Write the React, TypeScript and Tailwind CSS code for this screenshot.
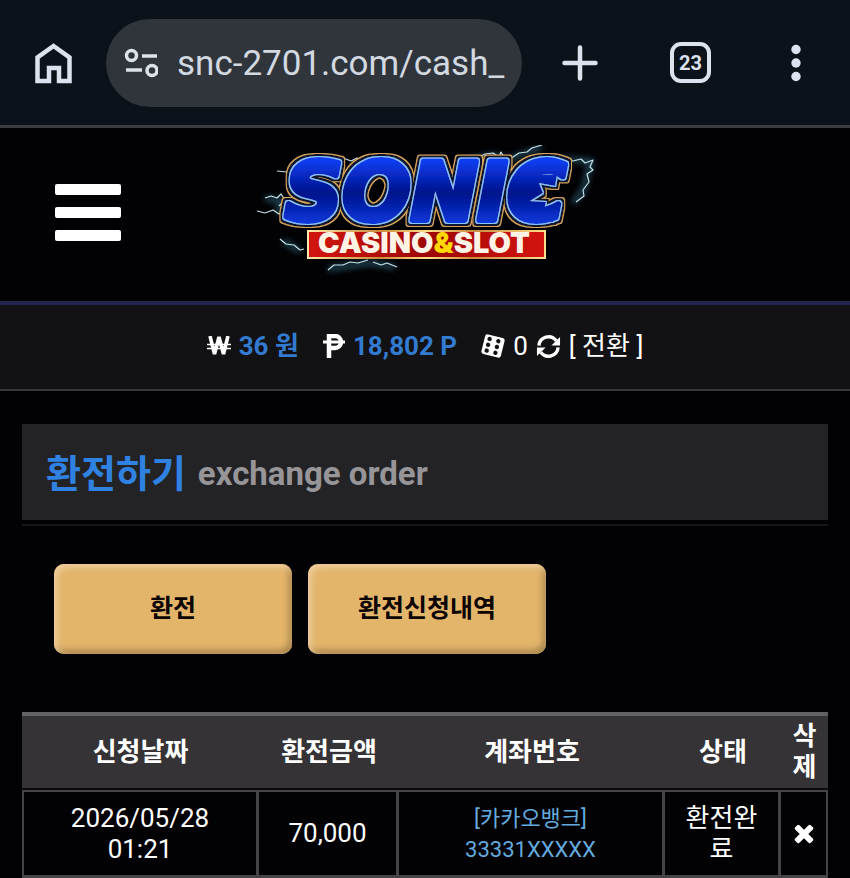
interface Order {
  date: string;
  time: string;
  amount: string;
  bank: string;
  account: string;
  status: string;
}

const ORDERS: Order[] = [
  {
    date: '2026/05/28',
    time: '01:21',
    amount: '70,000',
    bank: '[카카오뱅크]',
    account: '33331XXXXX',
    status: '환전완료',
  },
];

const TABS = ['환전', '환전신청내역'];

function SiteInfoIcon() {
  return (
    <svg width="34" height="30" viewBox="0 0 34 30" fill="none" stroke="#dde3ea" strokeWidth="3.500" className="shrink-0">
      <circle cx="7.500" cy="7.500" r="5" />
      <path d="M18 8h15M2 22h16" />
      <circle cx="28" cy="22.500" r="5" />
    </svg>
  );
}

function BrowserBar() {
  return (
    <header className="flex h-[128px] items-center border-b-3 border-[#3b3d42] bg-[#0c1219] pr-[45px] pl-[34px] text-[#dde3ee]">
      <button aria-label="Home" className="shrink-0">
        <svg width="38" height="42" viewBox="0 0 38 42" fill="none" stroke="currentColor" strokeWidth="4.500">
          <path d="M3.500 39V15.500L19.500 4l16 11.500V39H25V26H15v13z" />
        </svg>
      </button>
      <div className="ml-[34px] flex h-[88px] flex-1 items-center rounded-full bg-[#2f353b] pr-4 pl-[18px]">
        <SiteInfoIcon />
        <input
          aria-label="Address"
          readOnly
          defaultValue="snc-2701.com/cash_"
          className="ml-[19px] w-full min-w-0 bg-transparent pt-1 text-[35px] text-[#d3d9e1] outline-none"
        />
      </div>
      <button aria-label="New tab" className="ml-10 shrink-0">
        <svg width="36" height="36" viewBox="0 0 36 36" stroke="currentColor" strokeWidth="4.500" strokeLinecap="round">
          <path d="M18 2.500v31M2.500 18h31" />
        </svg>
      </button>
      <button
        aria-label="23 open tabs"
        className="ml-[72px] size-[41px] shrink-0 rounded-[11px] border-4 border-current text-[20px] font-bold"
      >
        23
      </button>
      <button aria-label="More" className="ml-[76px] shrink-0">
        <svg width="18" height="38" viewBox="0 0 18 38" fill="currentColor">
          <circle cx="9" cy="5.500" r="4.700" />
          <circle cx="9" cy="19" r="4.700" />
          <circle cx="9" cy="32.500" r="4.700" />
        </svg>
      </button>
    </header>
  );
}

function Logo() {
  return (
    <svg width="360" height="140" viewBox="0 0 360 140" role="img" aria-label="Sonic Casino & Slot">
      <defs>
        <linearGradient id="blue" gradientUnits="userSpaceOnUse" x1="0" y1="16" x2="0" y2="80">
          <stop offset="0" stopColor="#0b3df0" />
          <stop offset="0.5" stopColor="#02128a" />
          <stop offset="1" stopColor="#0a3ae0" />
        </linearGradient>
        <linearGradient id="gold" x1="0" y1="0" x2="1" y2="0">
          <stop offset="0" stopColor="#ffe9a8" />
          <stop offset="0.3" stopColor="#c98a3c" />
          <stop offset="0.5" stopColor="#ffdf8a" />
          <stop offset="0.7" stopColor="#c98a3c" />
          <stop offset="1" stopColor="#ffe08c" />
        </linearGradient>
        <linearGradient id="red" x1="0" y1="0" x2="1" y2="0">
          <stop offset="0" stopColor="#d3150f" />
          <stop offset="0.5" stopColor="#9d0604" />
          <stop offset="1" stopColor="#d3150f" />
        </linearGradient>
        <filter id="glow" x="-20%" y="-20%" width="140%" height="140%">
          <feGaussianBlur stdDeviation="3" />
        </filter>
        {/* light edge, navy rim, then a thin gold rim around the letters */}
        <filter id="rim" x="-10%" y="-20%" width="120%" height="140%">
          <feMorphology in="SourceAlpha" operator="dilate" radius="1" result="edge" />
          <feMorphology in="SourceAlpha" operator="dilate" radius="3" result="inner" />
          <feMorphology in="SourceAlpha" operator="dilate" radius="4" result="outer" />
          <feFlood floodColor="#8fc4ff" />
          <feComposite in2="edge" operator="in" result="light" />
          <feFlood floodColor="#07182f" />
          <feComposite in2="inner" operator="in" result="navy" />
          <feFlood floodColor="#d9a55c" />
          <feComposite in2="outer" operator="in" result="goldRim" />
          <feMerge>
            <feMergeNode in="goldRim" />
            <feMergeNode in="navy" />
            <feMergeNode in="light" />
            <feMergeNode in="SourceGraphic" />
          </feMerge>
        </filter>
      </defs>
      <g fill="none" stroke="#4b9fbd" strokeWidth="4" opacity="0.6" filter="url(#glow)">
        <path d="M20 53l18 4-6 12M215 18l33-8 14 5 35-13M312 14l34 2-8 30-10 12M38 96l17 10M83 124l42-6 25 4" />
      </g>
      <g fill="none" stroke="#c3e3ea" strokeWidth="1.200" strokeLinejoin="round">
        <path d="M12 66l8 2 8-3 6 4 5-3M20 53l6-2 6 2 4-4 4 6-6 6M32 26l10 1 8-3M92 16l6-3 8 3 6-3 6 2 8-2" />
        <path d="M215 18l9-4 8-1 8-4 8-1 6 4 2-5 4 7 8-2 6-4 8-1 5-4 10-3" />
        <path d="M310 16l10-3 8 3 8-2 4 4 8-3-3 7 3 3-6 4 2 8-6 8 1 6-8 6" />
        <path d="M35 94l6 5 8 1 6 5 4-1M83 125l6-5 9 0 7-3 8 1 10-3M128 117l8 3 6-2 10 4" />
      </g>
      <g fill="url(#blue)" filter="url(#rim)">
        <text
          x="40"
          y="75"
          fontFamily="'DejaVu Sans', sans-serif"
          fontSize="80"
          fontWeight="700"
          fontStyle="italic"
          stroke="url(#blue)"
          strokeWidth="6"
          strokeLinejoin="round"
        >
          SONIC
        </text>
        {/* torn inner edge of the last letter */}
        <path d="M276 28l36 2-2 11-16-3 4 10-13 8 16 1-2 8 13-6-4 18-32-4z" />
      </g>
      <rect x="63" y="86" width="237" height="27" fill="url(#red)" stroke="url(#gold)" strokeWidth="2" />
      <text x="179" y="108" textAnchor="middle" fontFamily="Inter, sans-serif" fontSize="29" fontWeight="900" fill="#fff3e6">
        CASINO<tspan fill="#ffd800">&amp;</tspan>SLOT
      </text>
    </svg>
  );
}

function WonIcon() {
  return (
    <svg width="24" height="20" viewBox="0 0 24 20" fill="none" stroke="#fff">
      <path d="M3 0l4.500 18L12 1l4.500 17L21 0" strokeWidth="3.600" strokeLinejoin="bevel" />
      <path d="M0 8.500h24M0 12.500h24" strokeWidth="1.500" />
    </svg>
  );
}

function PesoIcon() {
  return (
    <svg width="22" height="24" viewBox="0 0 22 24" fill="none" stroke="#fff">
      <path d="M6 24V2h6a5 5 0 0 1 0 12H6" strokeWidth="4.500" />
      <path d="M0 8h22" strokeWidth="3" />
    </svg>
  );
}

function DiceIcon() {
  return (
    <svg width="24" height="26" viewBox="0 0 24 26">
      <g transform="rotate(14 12 13)">
        <rect x="2" y="3" width="20" height="20" rx="2.500" fill="#fff" />
        <g fill="#121113">
          <circle cx="7" cy="7" r="2.200" />
          <circle cx="16" cy="7" r="2.200" />
          <circle cx="7" cy="13" r="2.200" />
          <circle cx="16" cy="13" r="2.200" />
          <circle cx="7" cy="19" r="2.200" />
          <circle cx="16" cy="19" r="2.200" />
        </g>
      </g>
    </svg>
  );
}

function ConvertIcon() {
  return (
    <svg width="25" height="25" viewBox="0 0 26 26" fill="none" stroke="#fff" strokeWidth="3.500">
      <path d="M3 12a10 10 0 0 1 18-5M23 14a10 10 0 0 1-18 5" />
      <path d="M25 3v9h-9zM1 23v-9h9z" fill="#fff" stroke="none" />
    </svg>
  );
}

function DeleteIcon() {
  return (
    <svg width="20" height="20" viewBox="0 0 20 20" fill="#fff" className="mx-auto">
      <rect x="-1" y="7" width="22" height="6" rx="1.500" transform="rotate(45 10 10)" />
      <rect x="-1" y="7" width="22" height="6" rx="1.500" transform="rotate(-45 10 10)" />
    </svg>
  );
}

function Balance() {
  return (
    <div className="flex h-[90px] items-center justify-center border-t-4 border-b-2 border-t-[#20244f] border-b-[#373638] bg-[#121113] pb-0.5 text-[26px] text-white">
      <WonIcon />
      <span className="ml-2 font-bold text-[#337bd0]">36 원</span>
      <span className="ml-6"><PesoIcon /></span>
      <span className="ml-2 font-bold text-[#337bd0]">18,802 P</span>
      <span className="ml-6"><DiceIcon /></span>
      <span className="ml-2">0</span>
      <button className="ml-2 flex items-center gap-2">
        <ConvertIcon />
        [ 전환 ]
      </button>
    </div>
  );
}

function OrderTable() {
  return (
    <table className="mt-[58px] w-full table-fixed border-separate border-spacing-0 text-center text-[26px] leading-[31px] text-white">
      <colgroup>
        <col className="w-[237px]" />
        <col className="w-[140px]" />
        <col />
        <col className="w-[116px]" />
        <col className="w-[47px]" />
      </colgroup>
      <thead>
        <tr className="h-[78px] *:border-t-4 *:border-b-2 *:border-t-[#626163] *:border-b-[#0c0a0d] *:bg-[#353336]">
          <th>신청날짜</th>
          <th>환전금액</th>
          <th>계좌번호</th>
          <th>상태</th>
          <th className="px-2 break-all">삭제</th>
        </tr>
      </thead>
      <tbody>
        {ORDERS.map((order) => (
          <tr
            key={order.date + order.time}
            className="h-[88px] *:border-t-2 *:border-r-3 *:border-b-3 *:border-[#454346] *:first:border-l-2 *:last:border-r-2"
          >
            <td>
              {order.date}
              <br />
              {order.time}
            </td>
            <td>{order.amount}</td>
            <td className="text-[22px] text-[#63abdf]">
              {order.bank}
              <br />
              {order.account}
            </td>
            <td className="px-4 break-all">{order.status}</td>
            <td>
              <button aria-label="삭제" className="block w-full">
                <DeleteIcon />
              </button>
            </td>
          </tr>
        ))}
      </tbody>
    </table>
  );
}

export default function App() {
  return (
    <div className="min-h-screen bg-[#020104] font-[Roboto,'Noto_Sans_CJK_KR',sans-serif]">
      <BrowserBar />
      <div className="grid h-[173px] grid-cols-[1fr_auto_1fr] items-center">
        <button aria-label="Menu" className="ml-[55px] flex w-[66px] flex-col gap-3 pb-1">
          <span className="h-[11px] rounded-xs bg-white" />
          <span className="h-[11px] rounded-xs bg-white" />
          <span className="h-[11px] rounded-xs bg-white" />
        </button>
        <Logo />
      </div>
      <Balance />
      <main className="px-[22px] pt-[33px]">
        <div className="border-b-2 border-[#171619] pb-1">
          <h1 className="flex h-[96px] items-center gap-3 bg-[#232224] px-6 pt-1 font-bold">
            <span className="text-[38px] text-[#3082e2]">환전하기</span>
            <span className="text-[33px] text-[#979598]">exchange order</span>
          </h1>
        </div>
        <div className="mt-[38px] flex gap-4 px-8">
          {TABS.map((tab) => (
            <button
              key={tab}
              className="h-[90px] w-[238px] rounded-[10px] bg-[#e2b56b] text-[25px] font-bold text-[#0c0303] shadow-[inset_3px_3px_6px_#f1cfa0,inset_-3px_-4px_6px_#a8854c]"
            >
              {tab}
            </button>
          ))}
        </div>
        <OrderTable />
      </main>
    </div>
  );
}
